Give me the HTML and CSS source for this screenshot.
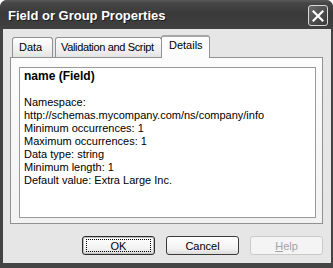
FILE: index.html
```html
<!DOCTYPE html>
<html>
<head>
<meta charset="utf-8">
<link rel="stylesheet" href="styles.css">
</head>
<body>
<div class="window">
  <div class="titlebar">
    <span class="title">Field or Group Properties</span>
    <span class="close">
      <svg width="12" height="12" viewBox="0 0 12 12"><path d="M1.5 1.5 L10.5 10.5 M10.5 1.5 L1.5 10.5" stroke="#fff" stroke-width="2.2" stroke-linecap="square"/></svg>
    </span>
  </div>
  <div class="client">
    <div class="tabs">
      <div class="tab tab-data">Data</div>
      <div class="tab tab-valid">Validation and Script</div>
      <div class="tab tab-active">Details</div>
    </div>
    <div class="panel">
      <div class="box">
        <div class="heading">name (Field)</div>
        <div class="blank">&nbsp;</div>
        <div>Namespace:</div>
        <div>http://schemas.mycompany.com/ns/company/info</div>
        <div>Minimum occurrences: 1</div>
        <div>Maximum occurrences: 1</div>
        <div>Data type: string</div>
        <div>Minimum length: 1</div>
        <div>Default value: Extra Large Inc.</div>
      </div>
    </div>
    <div class="buttons">
      <div class="btn btn-default"><span class="focus">OK</span></div>
      <div class="btn">Cancel</div>
      <div class="btn btn-disabled"><span><u>H</u>elp</span></div>
    </div>
  </div>
</div>
</body>
</html>
```

FILE: styles.css
```css
html, body {
  margin: 0;
  padding: 0;
  background: #ffffff;
}
body {
  width: 333px;
  height: 268px;
  overflow: hidden;
  font-family: "Liberation Sans", Arial, sans-serif;
  font-size: 11px;
  color: #000;
}
.window {
  width: 333px;
  height: 268px;
  box-sizing: border-box;
  background: #444444;
  border-radius: 7px 7px 0 0;
  display: flex;
  flex-direction: column;
  padding: 0 2px 5px 3px;
}
.titlebar {
  height: 29px;
  flex: none;
  display: flex;
  align-items: center;
  justify-content: space-between;
  margin: 0 -2px 0 -3px;
  padding: 0 5px 0 8px;
  border-radius: 7px 7px 0 0;
  background: linear-gradient(#5a5a5a 0px, #464646 3px, #393939 14px, #414141 29px);
}
.title {
  font-family: "Liberation Sans", Arial, sans-serif;
  font-weight: bold;
  font-size: 13px;
  color: #ffffff;
  text-shadow: 1px 1px 0 #1e1e1e;
  padding-top: 1px;
}
.close {
  width: 18px;
  height: 19px;
  border: 1px solid #d8d8d8;
  border-radius: 3px;
  background: linear-gradient(135deg, #6a6a6a, #4a4a4a 60%, #3a3a3a);
  display: flex;
  align-items: center;
  justify-content: center;
  margin-top: 2px;
}
.client {
  flex: 1;
  background: #e6e6e6;
  display: flex;
  flex-direction: column;
  padding: 6px 0 8px 0;
}
.tabs {
  height: 22px;
  display: flex;
  align-items: flex-end;
  padding-left: 9px;
  position: relative;
  z-index: 1;
}
.tab {
  box-sizing: border-box;
  height: 20px;
  border: 1px solid #919191;
  border-bottom: none;
  border-radius: 3px 3px 0 0;
  background: linear-gradient(#ffffff, #f0f0f0 60%, #e4e4e4);
  padding: 3px 0 0 6px;
  white-space: nowrap;
}
.tab-data {
  width: 41px;
}
.tab-valid {
  width: 107px;
  margin-left: 2px;
  padding-left: 5px;
  letter-spacing: -0.35px;
}
.tab-active {
  width: 49px;
  height: 23px;
  margin-left: -1px;
  margin-bottom: -1px;
  background: #fcfcfc;
  border-top: 2px solid #a6a6a6;
  padding: 2px 0 0 7px;
}
.panel {
  height: 167px;
  box-sizing: border-box;
  margin: 0 8px 0 7px;
  border: 1px solid #919191;
  background: linear-gradient(#fcfcfc, #f2f2f2);
  padding: 9px 6px 5px 8px;
}
.box {
  height: 100%;
  box-sizing: border-box;
  border: 1px solid #999999;
  background: #ffffff;
  padding: 2px 4px;
  line-height: 13px;
}
.heading {
  font-weight: bold;
  font-size: 12px;
}
.buttons {
  margin-top: 12px;
  display: flex;
  justify-content: flex-end;
  gap: 11px;
  padding-right: 8px;
}
.btn {
  box-sizing: border-box;
  width: 73px;
  height: 19px;
  border: 1px solid #3a3a3a;
  border-radius: 3px;
  background: linear-gradient(#ffffff, #f2f2f2 70%, #dcdcdc);
  display: flex;
  align-items: center;
  justify-content: center;
}
.btn-default {
  border-color: #2e2e2e;
  box-shadow: inset 0 0 0 1px #bdbdbd;
}
.focus {
  box-sizing: border-box;
  width: 65px;
  height: 13px;
  border: 1px dotted #000;
  display: flex;
  align-items: center;
  justify-content: center;
}
.btn-disabled {
  border-color: #cacaca;
  background: #f4f4f4;
  color: #a3a3a3;
}
```
